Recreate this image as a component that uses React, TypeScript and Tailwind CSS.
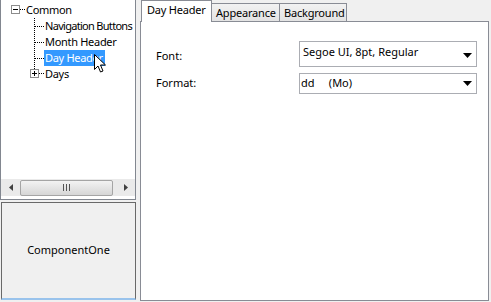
import React from "react";

const font = { fontFamily: '"Noto Sans", "Open Sans", sans-serif' };

function Caret() {
  return (
    <svg width="9" height="5" viewBox="0 0 9 5" className="block">
      <path d="M0 0 H9 L4.5 5 Z" fill="#000" />
    </svg>
  );
}

function Tree() {
  return (
    <div className="relative h-[178px] overflow-hidden bg-white">
      <svg className="absolute left-0 top-0" width="134" height="90">
        <rect x="10.5" y="5.5" width="8" height="8" fill="#fff" stroke="#8c8c8c" />
        <line x1="12" y1="9.5" x2="17" y2="9.5" stroke="#000" />
        <line x1="19" y1="9.5" x2="24" y2="9.5" stroke="#000" strokeDasharray="1 1" />
        <line x1="33.5" y1="18" x2="33.5" y2="69" stroke="#000" strokeDasharray="1 1" />
        <line x1="34" y1="26.5" x2="43" y2="26.5" stroke="#000" strokeDasharray="1 1" />
        <line x1="34" y1="42.5" x2="43" y2="42.5" stroke="#000" strokeDasharray="1 1" />
        <line x1="34" y1="58.5" x2="43" y2="58.5" stroke="#000" strokeDasharray="1 1" />
        <rect x="29.5" y="69.5" width="8" height="8" fill="#fff" stroke="#8c8c8c" />
        <line x1="31" y1="73.5" x2="36" y2="73.5" stroke="#000" />
        <line x1="33.5" y1="71" x2="33.5" y2="76" stroke="#000" />
        <line x1="38" y1="73.5" x2="43" y2="73.5" stroke="#000" strokeDasharray="1 1" />
      </svg>
      <div className="relative flex flex-col pt-[2px] text-[11px] leading-[16px] tracking-[-0.3px] text-black whitespace-nowrap" style={font}>
        <div className="h-[16px] pl-[25px]">Common</div>
        <div className="h-[16px] pl-[44px] tracking-[-0.7px]">Navigation Buttons</div>
        <div className="h-[16px] pl-[44px]">Month Header</div>
        <div className="h-[16px] pl-[43px]">
          <span className="inline-block h-[16px] w-[61px] overflow-hidden bg-[#3399ff] pl-[1px] text-white">Day Header</span>
        </div>
        <div className="h-[16px] pl-[44px]">Days</div>
      </div>
      <svg className="absolute left-[93px] top-[54px]" width="14" height="20" viewBox="0 0 14 20">
        <path d="M0.5 0.5 V15.5 L4 12 L6.5 18 L9 17 L6.5 11 H11.5 Z" fill="#fff" stroke="#000" strokeLinejoin="round" />
      </svg>
    </div>
  );
}

function HScroll() {
  return (
    <div className="flex h-[17px] items-center bg-[#eaeaea]">
      <div className="flex w-[19px] items-center justify-center">
        <svg width="4" height="7" viewBox="0 0 4 7"><path d="M4 0 V7 L0 3.5 Z" fill="#404040" /></svg>
      </div>
      <div className="flex h-[16px] w-[93px] items-center justify-center rounded-[2px] border border-[#a5a5a5] bg-gradient-to-b from-[#f3f3f3] to-[#d6d6d6]">
        <svg width="7" height="7" viewBox="0 0 7 7">
          <line x1="0.5" y1="0" x2="0.5" y2="7" stroke="#555" />
          <line x1="3.5" y1="0" x2="3.5" y2="7" stroke="#555" />
          <line x1="6.5" y1="0" x2="6.5" y2="7" stroke="#555" />
        </svg>
      </div>
      <div className="flex flex-1 items-center justify-center pl-[4px]">
        <svg width="4" height="7" viewBox="0 0 4 7"><path d="M0 0 V7 L4 3.5 Z" fill="#404040" /></svg>
      </div>
    </div>
  );
}

export default function App() {
  return (
    <div className="flex h-[302px] w-[491px] bg-[#f0f0f0]" style={font}>
      <div className="flex w-[136px] flex-col">
        <div className="h-[200px] border-x border-b border-[#828790] bg-white">
          <Tree />
          <div className="border-t border-white">
            <HScroll />
          </div>
        </div>
        <div className="mt-[2px] ml-[1px] flex h-[98px] items-center justify-center border-x border-t border-b-2 border-x-[#696969] border-t-[#696969] border-b-[#99c3ec] bg-[#f0f0f0] text-[11px] text-black">
          ComponentOne
        </div>
      </div>
      <div className="ml-[4px] flex w-[349px] flex-col">
        <div className="flex h-[21px] items-end text-[11px] tracking-[-0.2px] text-black">
          <div className="relative z-10 -mb-[1px] ml-[1px] flex h-[22px] w-[71px] items-start border-x border-t border-[#898c95] bg-white pl-[5px] pt-[1px]">
            Day Header
          </div>
          <div className="flex h-[18px] w-[68px] items-start whitespace-nowrap border-t border-r border-[#898c95] bg-gradient-to-b from-[#f2f2f2] to-[#e3e3e3] pl-[4px] pt-[1px]">
            Appearance
          </div>
          <div className="flex h-[18px] w-[67px] items-start whitespace-nowrap border-t border-r border-[#898c95] bg-gradient-to-b from-[#f2f2f2] to-[#e3e3e3] pl-[4px] pt-[1px]">
            Background
          </div>
        </div>
        <div className="h-[280px] border border-[#898c95] bg-white pt-[19px] text-[11px] text-black">
          <div className="flex">
            <div className="w-[158px] pl-[15px] pt-[7px]">Font:</div>
            <div className="flex h-[26px] w-[178px] items-start justify-between border border-[#abadb3] pl-[3px] pr-[4px] pt-[2px]">
              <span>Segoe UI, 8pt, Regular</span>
              <span className="pt-[9px]"><Caret /></span>
            </div>
          </div>
          <div className="mt-[6px] flex">
            <div className="w-[158px] pl-[15px] pt-[2px]">Format:</div>
            <div className="flex h-[21px] w-[178px] items-center justify-between border border-[#abadb3] pl-[1px] pr-[4px]">
              <span className="whitespace-pre">dd     (Mo)</span>
              <Caret />
            </div>
          </div>
        </div>
      </div>
    </div>
  );
}
